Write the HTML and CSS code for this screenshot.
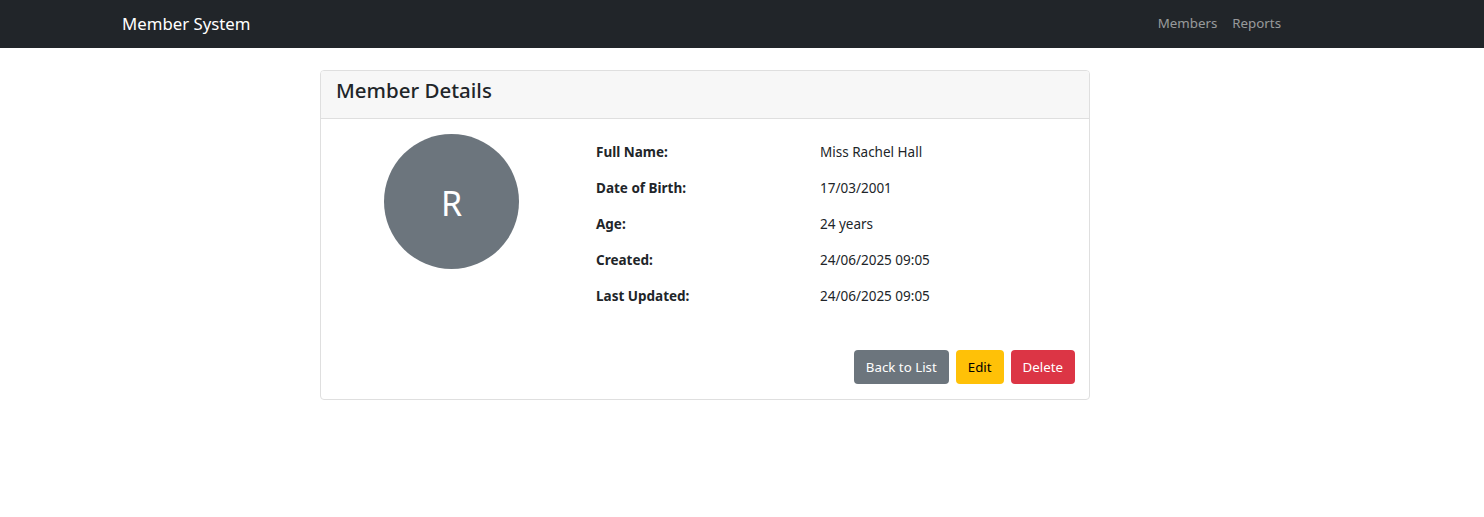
FILE: index.html
```html
<!DOCTYPE html>
<html lang="en">
<head>
<meta charset="utf-8">
<title>Member Details</title>
<link rel="stylesheet" href="styles.css">
</head>
<body>
<header class="navbar">
  <a class="brand" href="#">Member System</a>
  <nav class="nav">
    <a class="nav-link" href="#">Members</a>
    <a class="nav-link" href="#">Reports</a>
  </nav>
</header>
<main class="main">
  <section class="card">
    <div class="card-header"><h4 class="card-title">Member Details</h4></div>
    <div class="card-body">
      <div class="row">
        <div class="col-avatar">
          <div class="avatar">R</div>
        </div>
        <div class="col-info">
          <table class="details">
            <tr><th>Full Name:</th><td>Miss Rachel Hall</td></tr>
            <tr><th>Date of Birth:</th><td>17/03/2001</td></tr>
            <tr><th>Age:</th><td>24 years</td></tr>
            <tr><th>Created:</th><td>24/06/2025 09:05</td></tr>
            <tr><th>Last Updated:</th><td>24/06/2025 09:05</td></tr>
          </table>
        </div>
      </div>
      <div class="actions">
        <a class="btn btn-secondary" href="#">Back to List</a>
        <a class="btn btn-warning" href="#">Edit</a>
        <a class="btn btn-danger" href="#">Delete</a>
      </div>
    </div>
  </section>
</main>
</body>
</html>
```
FILE: styles.css
```css
* { box-sizing: border-box; }
html, body { margin: 0; padding: 0; }
body {
  font-family: "Noto Sans", "Open Sans", sans-serif;
  font-size: 14px;
  color: #212529;
  background: #fff;
}
a { text-decoration: none; }

.navbar {
  height: 48px;
  background: #212529;
  display: flex;
  align-items: center;
  justify-content: space-between;
  padding: 0 203px 0 122px;
}
.brand {
  color: #fff;
  font-size: 16.8px;
  line-height: 1;
}
.nav { display: flex; gap: 15px; padding-bottom: 2px; }
.nav-link {
  color: rgba(255, 255, 255, 0.55);
  font-size: 13.3px;
}

.main { padding: 22px 0 0 320px; }

.card {
  width: 770px;
  border: 1px solid #dfdfdf;
  border-radius: 4px;
  overflow: hidden;
}
.card-header {
  background: #f7f7f7;
  border-bottom: 1px solid #dfdfdf;
  height: 48px;
  display: flex;
  align-items: center;
  padding: 0 15px 8px;
}
.card-title {
  margin: 0;
  font-size: 20.5px;
  font-weight: 500;
  line-height: 1.2;
}
.card-body { padding: 15px 14px 15px 16px; }

.row { display: flex; }
.col-avatar {
  width: 229px;
  display: flex;
  justify-content: center;
}
.avatar {
  width: 135px;
  height: 135px;
  border-radius: 50%;
  background: #6c757d;
  color: #fff;
  display: flex;
  align-items: center;
  justify-content: center;
  font-size: 34px;
  padding-top: 2px;
}
.col-info { flex: 1; padding-left: 26px; }
.details { border-collapse: collapse; width: 100%; }
.details th, .details td {
  height: 36px;
  padding: 0 4px;
  text-align: left;
  vertical-align: middle;
  font-size: 13.5px;
}
.details th { width: 224px; font-weight: 700; }
.details td { font-weight: 400; }

.actions {
  display: flex;
  justify-content: flex-end;
  gap: 7px;
  margin-top: 36px;
}
.btn {
  display: inline-flex;
  align-items: center;
  height: 34px;
  padding: 0 12px;
  border-radius: 4px;
  font-size: 13.3px;
  color: #fff;
}
.btn-secondary { background: #6c757d; }
.btn-warning { background: #ffc107; color: #000; }
.btn-danger { background: #dc3545; }
```
